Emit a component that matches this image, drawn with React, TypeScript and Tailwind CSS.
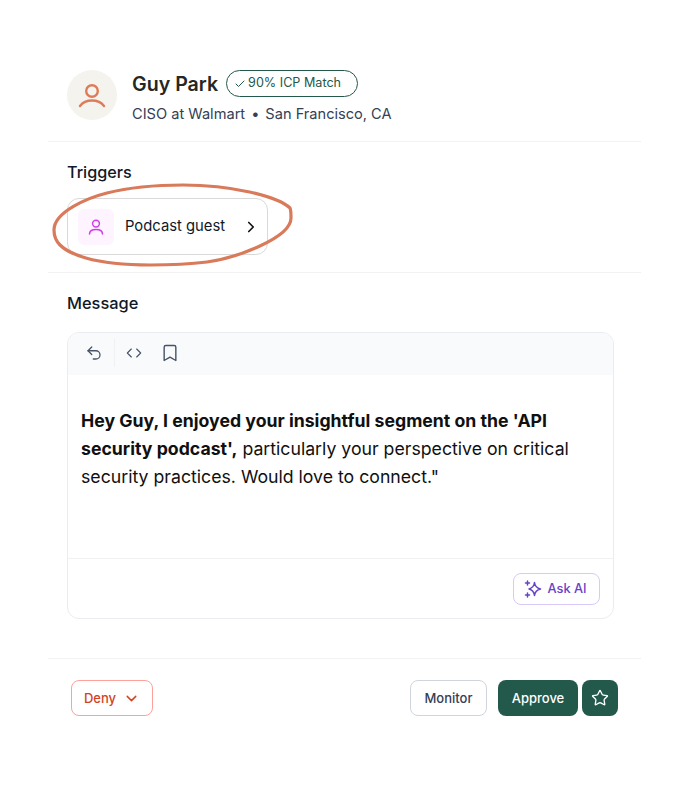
import { Check, ChevronDown, ChevronRight, Code, Bookmark, Undo2, Star } from 'lucide-react';

function AskAiIcon() {
  return (
    <svg width="18" height="18" viewBox="0 0 18 18" fill="none" stroke="currentColor" strokeWidth="1.5" strokeLinecap="round" strokeLinejoin="round">
      <path d="M10.5 2.5C11 6.5 12.5 8 16.5 9C12.5 10 11 11.5 10.5 15.5C10 11.5 8.5 10 5 9C8.5 8 10 6.5 10.5 2.5Z" />
      <path d="M3.5 1V5M1.5 3H5.5M3.5 13V17M1.5 15H5.5" />
    </svg>
  );
}

export default function App() {
  return (
    <div className="min-h-[787px] bg-white px-12 pt-[70px] font-['Inter',sans-serif]">
      {/* Profile */}
      <div className="flex h-[72px] items-start gap-[15px] border-b border-[#f3f1f1] px-[19px]">
        <div className="flex h-[50px] w-[50px] items-center justify-center rounded-full bg-[#f4f3ee]">
          <svg className="h-7 w-7 text-[#dd7c5a]" viewBox="0 0 28 28" fill="none" stroke="currentColor" strokeWidth="2.4" strokeLinecap="round">
            <circle cx="14" cy="10" r="5.8" />
            <path d="M2 25C5 21 9 19.5 14 19.5C19 19.5 23 21 26 25" />
          </svg>
        </div>
        <div>
          <div className="flex items-start gap-2">
            <span className="pt-px text-[19.6px] leading-[27px] font-semibold text-[#262626]">Guy Park</span>
            <span className="flex h-[27px] w-[132px] items-center gap-[2px] rounded-full border border-[#23594b] pl-[7px] text-[12.6px] text-[#23594b]">
              <Check size={12} />
              90% ICP Match
            </span>
          </div>
          <p className="mt-[6px] flex text-[14.6px] leading-5 text-[#344054]">
            <span>CISO at Walmart</span>
            <span className="mx-[6px]">•</span>
            <span>San Francisco, CA</span>
          </p>
        </div>
      </div>

      {/* Triggers */}
      <div className="h-[131px] border-b border-[#f3f1f1] px-[19px] pt-5">
        <h2 className="text-[16.2px] leading-5 font-medium text-[#101828]">Triggers</h2>
        <div className="relative mt-4">
          <div className="flex h-[57px] w-[201px] items-center rounded-xl border border-[#d9d9d9] pl-[10px]">
            <div className="flex h-9 w-9 items-center justify-center rounded-md bg-[#fdf4ff]">
              <svg className="h-4 w-4 text-[#d13de8]" viewBox="0 0 16 16" fill="none" stroke="currentColor" strokeWidth="1.5" strokeLinecap="round">
                <circle cx="8" cy="4.6" r="3.4" />
                <path d="M1.5 15C1.5 11.5 4.5 10.4 8 10.4C11.5 10.4 14.5 11.5 14.5 15" />
              </svg>
            </div>
            <span className="ml-[11px] text-[14.8px] text-[#101828]">Podcast guest</span>
            <ChevronRight size={18} strokeWidth={2.2} className="ml-[17px] text-[#101010]" />
          </div>
          <svg className="absolute top-[-16px] left-[-16px]" width="244" height="90" viewBox="0 0 244 90" fill="none">
            <path
              d="M239 26C226 14 180 3 132 3C100 3 76 6 56 11C36 16 3 30 3 48C3 55 5 59 9 63C17 71 40 83 99 83C125 83 140 82 156 80C185 76 240 56 240 36C240 31 240 28 239 26Z"
              stroke="#d97a5b"
              strokeWidth="3.2"
              strokeLinecap="round"
            />
          </svg>
        </div>
      </div>

      {/* Message */}
      <div className="h-[386px] border-b border-[#f3f1f1] px-[19px] pt-5">
        <h2 className="text-[16.4px] leading-5 font-medium text-[#101828]">Message</h2>
        <div className="mt-[19px] w-[547px] overflow-hidden rounded-xl border border-[#eaecf0]">
          <div className="flex h-[42px] items-center bg-[#f9fafb] pb-[2px] pl-[17px] text-[#475467]">
            <Undo2 size={18} strokeWidth={1.7} />
            <div className="ml-[11px] h-7 w-px bg-[#f0f1f3]" />
            <Code size={16} strokeWidth={1.7} className="ml-[11px]" />
            <Bookmark size={20} strokeWidth={1.7} className="ml-[18px]" />
          </div>
          <div className="h-[184px] border-b border-[#f0f1f3] px-[13px] pt-[32px] text-[17.7px] leading-7 text-[#101010]">
            <p>
              <strong className="font-bold">Hey Guy, I enjoyed your insightful segment on the 'API security podcast',</strong>{' '}
              particularly your perspective on critical security practices. Would love to connect."
            </p>
          </div>
          <div className="flex h-[59px] items-center justify-end pr-[13px]">
            <button className="flex h-8 w-[87px] items-center justify-center gap-[5px] rounded-lg border border-[#d9c9fb] pr-[2px] text-[12.8px] font-medium text-[#6941c6]">
              <AskAiIcon />
              Ask AI
            </button>
          </div>
        </div>
      </div>

      {/* Actions */}
      <div className="flex items-start justify-between pt-[21px] pr-[23px] pl-[23px]">
        <button className="flex h-9 w-[82px] items-center justify-center gap-[7px] rounded-lg border border-[#fda29b] pt-px text-[13px] font-medium text-[#d4421e]">
          Deny
          <ChevronDown size={17} strokeWidth={2} />
        </button>
        <div className="flex items-center">
          <button className="h-9 w-[77px] rounded-lg border border-[#d0d5dd] pt-px text-[13px] font-medium text-[#344054]">Monitor</button>
          <button className="ml-[11px] h-9 w-[80px] rounded-lg bg-[#23594b] pt-px text-[13px] font-medium text-white">Approve</button>
          <button className="ml-[4px] flex h-9 w-9 items-center justify-center rounded-lg bg-[#23594b] text-white">
            <Star size={18} strokeWidth={1.8} />
          </button>
        </div>
      </div>
    </div>
  );
}
